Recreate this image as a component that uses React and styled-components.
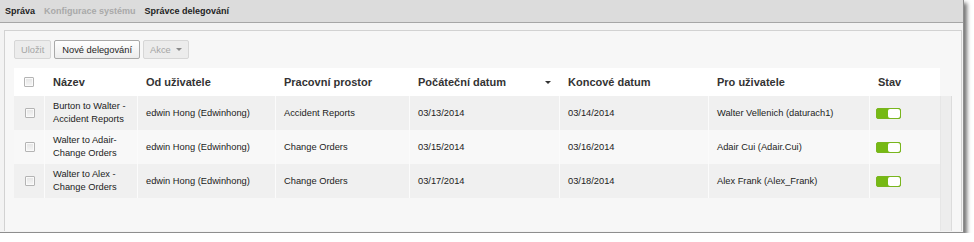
import React from 'react';
import styled, { createGlobalStyle } from 'styled-components';

const GlobalStyle = createGlobalStyle`
  body {
    margin: 0;
    background: #ffffff;
    font-family: "Liberation Sans", Arial, sans-serif;
  }
`;

const columns = [
  { key: 'check', title: '', width: 30 },
  { key: 'name', title: 'Název', width: 93 },
  { key: 'from', title: 'Od uživatele', width: 138 },
  { key: 'space', title: 'Pracovní prostor', width: 134 },
  { key: 'start', title: 'Počáteční datum', width: 150, sorted: true },
  { key: 'end', title: 'Koncové datum', width: 149 },
  { key: 'to', title: 'Pro uživatele', width: 161 },
  { key: 'state', title: 'Stav', width: 71 },
];

const rows = [
  {
    name: ['Burton to Walter -', 'Accident Reports'],
    from: 'edwin Hong (Edwinhong)',
    space: 'Accident Reports',
    start: '03/13/2014',
    end: '03/14/2014',
    to: 'Walter Vellenich (daturach1)',
  },
  {
    name: ['Walter to Adair-', 'Change Orders'],
    from: 'edwin Hong (Edwinhong)',
    space: 'Change Orders',
    start: '03/15/2014',
    end: '03/16/2014',
    to: 'Adair Cui (Adair.Cui)',
  },
  {
    name: ['Walter to Alex -', 'Change Orders'],
    from: 'edwin Hong (Edwinhong)',
    space: 'Change Orders',
    start: '03/17/2014',
    end: '03/18/2014',
    to: 'Alex Frank (Alex_Frank)',
  },
];

const gridTemplate = columns.map((c) => `${c.width}px`).join(' ');

export default function App() {
  return (
    <>
      <GlobalStyle />
      <Window>
        <Breadcrumbs>
          <Crumb>Správa</Crumb>
          <Crumb muted>Konfigurace systému</Crumb>
          <Crumb>Správce delegování</Crumb>
        </Breadcrumbs>
        <Panel>
          <Toolbar>
            <Button disabled pad={6}>Uložit</Button>
            <Button pad={7}>Nové delegování</Button>
            <Button disabled pad={6}>
              Akce <Caret />
            </Button>
          </Toolbar>
          <TableArea>
            <HeaderRow>
              {columns.map((c) => (
                <HeaderCell key={c.key} center={c.key === 'check'}>
                  {c.key === 'check' ? <Checkbox /> : c.title}
                  {c.sorted && <SortArrow />}
                </HeaderCell>
              ))}
            </HeaderRow>
            <Body>
              {rows.map((r, i) => (
                <Row key={i} odd={i % 2 === 1}>
                  <Cell first center>
                    <Checkbox />
                  </Cell>
                  <Cell>
                    <div>
                      {r.name[0]}
                      <br />
                      {r.name[1]}
                    </div>
                  </Cell>
                  <Cell>{r.from}</Cell>
                  <Cell>{r.space}</Cell>
                  <Cell>{r.start}</Cell>
                  <Cell>{r.end}</Cell>
                  <Cell>{r.to}</Cell>
                  <Cell toggle>
                    <Toggle>
                      <ToggleKnob />
                    </Toggle>
                  </Cell>
                </Row>
              ))}
            </Body>
            <ScrollTrack />
          </TableArea>
        </Panel>
      </Window>
    </>
  );
}

const Window = styled.div`
  width: 964px;
  height: 233px;
  box-sizing: border-box;
  display: flex;
  flex-direction: column;
  background: #f3f3f3;
  border-right: 1px solid #8e8e8e;
  border-bottom: 1px solid #8e8e8e;
  box-shadow: 3px 3px 4px rgba(0, 0, 0, 0.55);
`;

const Breadcrumbs = styled.div`
  height: 22px;
  flex: none;
  display: flex;
  align-items: center;
  gap: 9px;
  padding-left: 5px;
  background: #dcdcdc;
  border-bottom: 1px solid #a6a6a6;
`;

const Crumb = styled.span`
  font-size: 9px;
  font-weight: bold;
  color: ${(p) => (p.muted ? '#a9a9a9' : '#1e1e1e')};
`;

const Panel = styled.div`
  flex: 1;
  margin: 7px 1px 1px 4px;
  display: flex;
  flex-direction: column;
  padding: 9px 0 0 9px;
  background: #f7f7f7;
  border: 1px solid #d2d2d2;
  border-bottom: none;
  min-height: 0;
`;

const Toolbar = styled.div`
  display: flex;
  gap: 3px;
  height: 19px;
  margin-bottom: 9px;
`;

const Button = styled.button`
  height: 19px;
  box-sizing: border-box;
  padding: 0 ${(p) => p.pad}px;
  font-family: "Liberation Sans", Arial, sans-serif;
  font-size: 9.3px;
  display: flex;
  align-items: center;
  gap: 5px;
  border-radius: 2px;
  border: 1px solid ${(p) => (p.disabled ? '#d6d6d6' : '#a9a9a9')};
  color: ${(p) => (p.disabled ? '#a5a5a5' : '#1e1e1e')};
  background: ${(p) =>
    p.disabled ? '#ececec' : 'linear-gradient(#ffffff, #ececec)'};
`;

const Caret = styled.span`
  width: 0;
  height: 0;
  border-left: 3px solid transparent;
  border-right: 3px solid transparent;
  border-top: 3px solid #8a8a8a;
`;

const TableArea = styled.div`
  flex: 1;
  display: grid;
  grid-template-columns: 926px 12px;
  grid-template-rows: 28px 1fr;
  min-height: 0;
`;

const HeaderRow = styled.div`
  grid-column: 1;
  grid-row: 1;
  display: grid;
  grid-template-columns: ${gridTemplate};
  background: #ffffff;
`;

const HeaderCell = styled.div`
  display: flex;
  align-items: center;
  justify-content: ${(p) => (p.center ? 'center' : 'space-between')};
  padding: ${(p) => (p.center ? '0' : '0 9px')};
  font-size: 11px;
  font-weight: bold;
  color: #333333;
  white-space: nowrap;
`;

const SortArrow = styled.span`
  width: 0;
  height: 0;
  margin-right: -1px;
  border-left: 3px solid transparent;
  border-right: 3px solid transparent;
  border-top: 3px solid #333333;
`;

const Body = styled.div`
  grid-column: 1;
  grid-row: 2;
  display: flex;
  flex-direction: column;
`;

const Row = styled.div`
  height: 34px;
  display: grid;
  grid-template-columns: ${gridTemplate};
  background: ${(p) => (p.odd ? '#f8f8f8' : '#f0f0f0')};
`;

const Cell = styled.div`
  display: flex;
  align-items: center;
  justify-content: ${(p) => (p.center ? 'center' : 'flex-start')};
  padding: ${(p) => (p.center ? '0 0 0 2px' : p.toggle ? '0 6px' : '0 8px')};
  border-left: ${(p) => (p.first ? 'none' : '1px solid #fbfbfb')};
  font-size: 9.3px;
  line-height: 13px;
  color: #222222;
  white-space: nowrap;
`;

const Checkbox = styled.span`
  width: 10px;
  height: 10px;
  box-sizing: border-box;
  border: 1px solid #b4b4b4;
  border-radius: 1px;
  background: linear-gradient(#e4e4e4, #f6f6f6);
  box-shadow: inset 0 0 0 1px #fafafa;
`;

const Toggle = styled.span`
  width: 25px;
  height: 11px;
  box-sizing: border-box;
  display: flex;
  justify-content: flex-end;
  border: 1px solid #79b51e;
  border-radius: 2px;
  background: #76b914;
`;

const ToggleKnob = styled.span`
  width: 12px;
  height: 9px;
  background: #ffffff;
  border-radius: 2px;
`;

const ScrollTrack = styled.div`
  grid-column: 2;
  grid-row: 2;
  background: #ededed;
  border-left: 1px solid #e6e6e6;
  border-right: 1px solid #dcdcdc;
`;
